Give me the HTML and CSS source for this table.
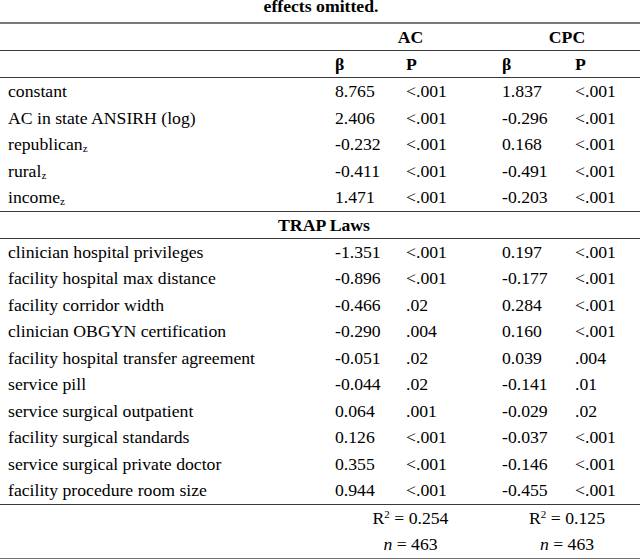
FILE: index.html
```html
<!DOCTYPE html>
<html>
<head>
<meta charset="utf-8">
<link rel="stylesheet" href="styles.css">
</head>
<body>
<div class="caption">effects omitted.</div>
<table class="reg">
  <colgroup>
    <col class="c-label">
    <col class="c-b1">
    <col class="c-p1">
    <col class="c-b2">
    <col class="c-p2">
  </colgroup>
  <thead>
    <tr class="hrow first">
      <th></th>
      <th colspan="2" class="grp grp-ac">AC</th>
      <th colspan="2" class="grp grp-cpc">CPC</th>
    </tr>
    <tr class="hrow">
      <th></th>
      <th class="lft">β</th>
      <th class="lft">P</th>
      <th class="lft">β</th>
      <th class="lft">P</th>
    </tr>
  </thead>
  <tbody>
    <tr><td>constant</td><td>8.765</td><td>&lt;.001</td><td>1.837</td><td>&lt;.001</td></tr>
    <tr><td>AC in state ANSIRH (log)</td><td>2.406</td><td>&lt;.001</td><td>-0.296</td><td>&lt;.001</td></tr>
    <tr><td>republican<span class="sub">z</span></td><td>-0.232</td><td>&lt;.001</td><td>0.168</td><td>&lt;.001</td></tr>
    <tr><td>rural<span class="sub">z</span></td><td>-0.411</td><td>&lt;.001</td><td>-0.491</td><td>&lt;.001</td></tr>
    <tr class="end"><td>income<span class="sub">z</span></td><td>1.471</td><td>&lt;.001</td><td>-0.203</td><td>&lt;.001</td></tr>
    <tr class="section end"><td colspan="5">TRAP Laws</td></tr>
    <tr><td>clinician hospital privileges</td><td>-1.351</td><td>&lt;.001</td><td>0.197</td><td>&lt;.001</td></tr>
    <tr><td>facility hospital max distance</td><td>-0.896</td><td>&lt;.001</td><td>-0.177</td><td>&lt;.001</td></tr>
    <tr><td>facility corridor width</td><td>-0.466</td><td>.02</td><td>0.284</td><td>&lt;.001</td></tr>
    <tr><td>clinician OBGYN certification</td><td>-0.290</td><td>.004</td><td>0.160</td><td>&lt;.001</td></tr>
    <tr><td>facility hospital transfer agreement</td><td>-0.051</td><td>.02</td><td>0.039</td><td>.004</td></tr>
    <tr><td>service pill</td><td>-0.044</td><td>.02</td><td>-0.141</td><td>.01</td></tr>
    <tr><td>service surgical outpatient</td><td>0.064</td><td>.001</td><td>-0.029</td><td>.02</td></tr>
    <tr><td>facility surgical standards</td><td>0.126</td><td>&lt;.001</td><td>-0.037</td><td>&lt;.001</td></tr>
    <tr><td>service surgical private doctor</td><td>0.355</td><td>&lt;.001</td><td>-0.146</td><td>&lt;.001</td></tr>
    <tr class="end"><td>facility procedure room size</td><td>0.944</td><td>&lt;.001</td><td>-0.455</td><td>&lt;.001</td></tr>
    <tr class="stat"><td></td><td colspan="2" class="grp grp-ac">R<span class="sup">2</span> = 0.254</td><td colspan="2" class="grp grp-cpc">R<span class="sup">2</span> = 0.125</td></tr>
    <tr class="stat last"><td></td><td colspan="2" class="grp grp-ac"><i>n</i> = 463</td><td colspan="2" class="grp grp-cpc"><i>n</i> = 463</td></tr>
  </tbody>
</table>
</body>
</html>
```

FILE: styles.css
```css
html, body {
  margin: 0;
  padding: 0;
  background: #ffffff;
}

body {
  font-family: "Liberation Serif", "Times New Roman", serif;
  font-size: 17.7px;
  color: #000000;
  width: 640px;
  overflow: hidden;
}

.caption {
  font-weight: bold;
  text-align: center;
  line-height: 13px;
  height: 13px;
  padding-bottom: 9px;
  padding-left: 2px;
}

.reg {
  width: 640px;
  table-layout: fixed;
  border-collapse: separate;
  border-spacing: 0;
  border-top: 2px solid #7a7a7a;
  border-bottom: 2px solid #6f6f6f;
}

.c-label { width: 327px; }
.c-b1 { width: 71px; }
.c-p1 { width: 96px; }
.c-b2 { width: 73px; }
.c-p2 { width: 73px; }

.reg th,
.reg td {
  padding: 0 0 0 8px;
  text-align: left;
  white-space: nowrap;
  font-weight: normal;
  line-height: 26.5px;
  vertical-align: middle;
}

.reg thead th {
  font-weight: bold;
  line-height: 26px;
  border-bottom: 1px solid #3a3a3a;
}

.reg th.grp,
.reg td.grp {
  text-align: center;
  padding: 0;
}

.reg .grp-ac {
  padding-right: 4px;
}

.reg .grp-cpc {
  padding-right: 8px;
}

.reg tr.end td {
  border-bottom: 1px solid #3a3a3a;
}

.reg tr.section td {
  font-weight: bold;
  text-align: center;
  line-height: 26px;
  padding: 0 0 0 8px;
}

.sub {
  font-size: 11px;
  vertical-align: -2px;
  line-height: 0;
}

.sup {
  font-size: 11px;
  vertical-align: 6px;
  line-height: 0;
}
```
